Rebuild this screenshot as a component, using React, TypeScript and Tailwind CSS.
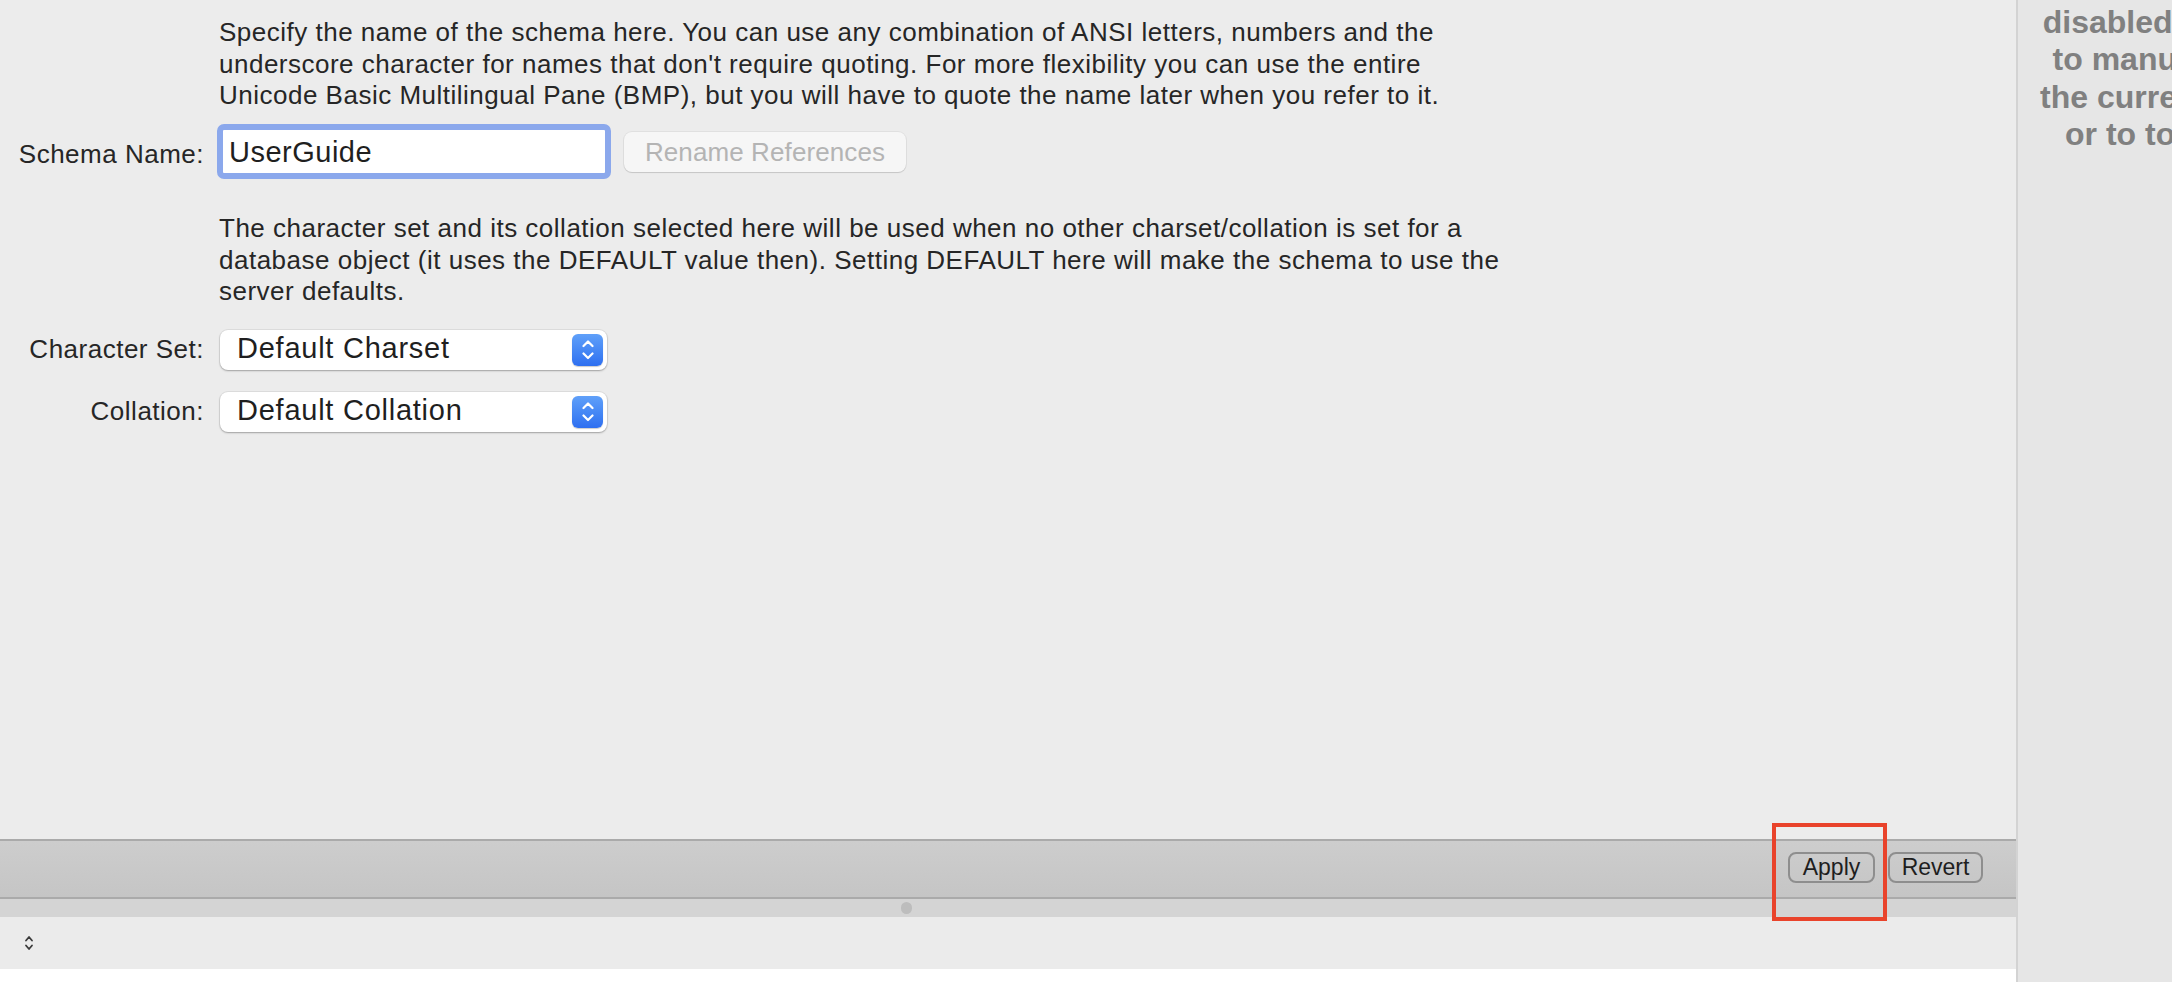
import React from 'react';

const Stepper = () => (
  <div className="flex h-[32px] w-[31px] items-center justify-center rounded-[6px] bg-gradient-to-b from-[#60a0f9] to-[#2e6ff0] shadow-[0_1px_1px_rgba(0,0,0,0.2)]">
    <svg width="12" height="20" viewBox="0 0 12 20" fill="none" stroke="white" strokeWidth="2.2" strokeLinecap="round" strokeLinejoin="round">
      <path d="M1.5 6 L6 1.5 L10.5 6" />
      <path d="M1.5 13.5 L6 18 L10.5 13.5" />
    </svg>
  </div>
);

const Select = ({ value }: { value: string }) => (
  <div className="flex h-[40px] w-[387px] items-center justify-between rounded-[8px] bg-white pl-[17px] pr-[4px] shadow-[0_0_0_1px_rgba(0,0,0,0.06),0_1px_2px_rgba(0,0,0,0.28)]">
    <span className="mb-[4px] text-[29px] leading-[36px] tracking-[0.75px] text-[#1f1f1f]">{value}</span>
    <Stepper />
  </div>
);

const Label = ({ children, className = '' }: { children: React.ReactNode; className?: string }) => (
  <div className={`w-[204px] shrink-0 text-right text-[26px] leading-[31.5px] tracking-[0.5px] text-[#262626] ${className}`}>{children}</div>
);

export default function App() {
  return (
    <div className="relative flex h-[982px] w-[2172px] overflow-hidden bg-[#ececec] font-['Liberation_Sans',Arial,sans-serif]">
      {/* Main editor pane */}
      <div className="flex w-[2016px] shrink-0 flex-col">
        <div className="flex-1">
          <p className="whitespace-nowrap pl-[219px] pt-[17px] text-[26px] leading-[31.5px] tracking-[0.5px] text-[#262626]">
            Specify the name of the schema here. You can use any combination of ANSI letters, numbers and the
            <br />
            underscore character for names that don't require quoting. For more flexibility you can use the entire
            <br />
            Unicode Basic Multilingual Pane (BMP), but you will have to quote the name later when you refer to it.
          </p>

          <div className="mt-[12.5px] flex items-start">
            <Label className="pt-[15px]">Schema Name:</Label>
            <div className="ml-[13px] h-[55px] w-[394px] rounded-[7px] border-[6px] border-[#8ba8ec] bg-white pl-[6px]">
              <span className="block pt-[2px] text-[29px] leading-[41px] tracking-[0.5px] text-[#1f1f1f]">UserGuide</span>
            </div>
            <button className="ml-[13px] mt-[8px] h-[40px] w-[282px] rounded-[8px] bg-[#f6f6f6] text-center text-[26px] leading-[40px] tracking-[0.1px] text-[#b4b4b4] shadow-[0_0_0_1px_rgba(0,0,0,0.05),0_1px_1px_rgba(0,0,0,0.12)]">
              Rename References
            </button>
          </div>

          <p className="mt-[34px] whitespace-nowrap pl-[219px] text-[26px] leading-[31.5px] tracking-[0.5px] text-[#262626]">
            The character set and its collation selected here will be used when no other charset/collation is set for a
            <br />
            database object (it uses the DEFAULT value then). Setting DEFAULT here will make the schema to use the
            <br />
            server defaults.
          </p>

          <div className="mt-[22.5px] flex items-center">
            <Label>Character Set:</Label>
            <div className="ml-[16px]">
              <Select value="Default Charset" />
            </div>
          </div>
          <div className="mt-[22px] flex items-center">
            <Label>Collation:</Label>
            <div className="ml-[16px]">
              <Select value="Default Collation" />
            </div>
          </div>
        </div>

        {/* Apply / Revert bar */}
        <div className="flex h-[60px] shrink-0 items-center justify-end gap-[13px] border-y-2 border-[#aaaaaa] bg-gradient-to-b from-[#cdcdcd] to-[#c5c5c5] pr-[33px]">
          <button className="mb-[3px] h-[31px] w-[87px] rounded-[8px] border-2 border-[#8e8e8e] text-[23px] leading-none text-[#1e1e1e]">Apply</button>
          <button className="mb-[3px] h-[31px] w-[95px] rounded-[8px] border-2 border-[#8e8e8e] text-[23px] leading-none text-[#1e1e1e]">Revert</button>
        </div>

        {/* Splitter */}
        <div className="flex h-[18px] shrink-0 items-center bg-[#d4d4d4] pl-[901px]">
          <div className="h-[12px] w-[11px] rounded-full bg-[#bdbdbd]" />
        </div>

        {/* Lower tab strip */}
        <div className="flex h-[52px] shrink-0 items-center bg-[#ebebeb] pl-[24px]">
          <svg width="10" height="16" viewBox="0 0 10 16" fill="none" stroke="#3a3a3a" strokeWidth="1.8" strokeLinecap="round" strokeLinejoin="round">
            <path d="M2 5.5 L5 2 L8 5.5" />
            <path d="M2 10.5 L5 14 L8 10.5" />
          </svg>
        </div>
        <div className="h-[13px] shrink-0 bg-white" />
      </div>

      {/* Context help side pane */}
      <div className="w-[156px] shrink-0 overflow-hidden border-l-2 border-[#d3d3d3] bg-[#e6e6e6]">
        <div className="w-[430px] whitespace-nowrap pt-[3.5px] text-center text-[32px] font-bold leading-[37.5px] text-[#808080]">
          disabled. Use the toolbar
          <br />
          to manually get help for
          <br />
          the current caret position
          <br />
          or to toggle automatic
        </div>
      </div>

      {/* Highlight annotation */}
      <div className="absolute left-[1772px] top-[823px] h-[98px] w-[115px] border-4 border-[#e9432b]" />
    </div>
  );
}
